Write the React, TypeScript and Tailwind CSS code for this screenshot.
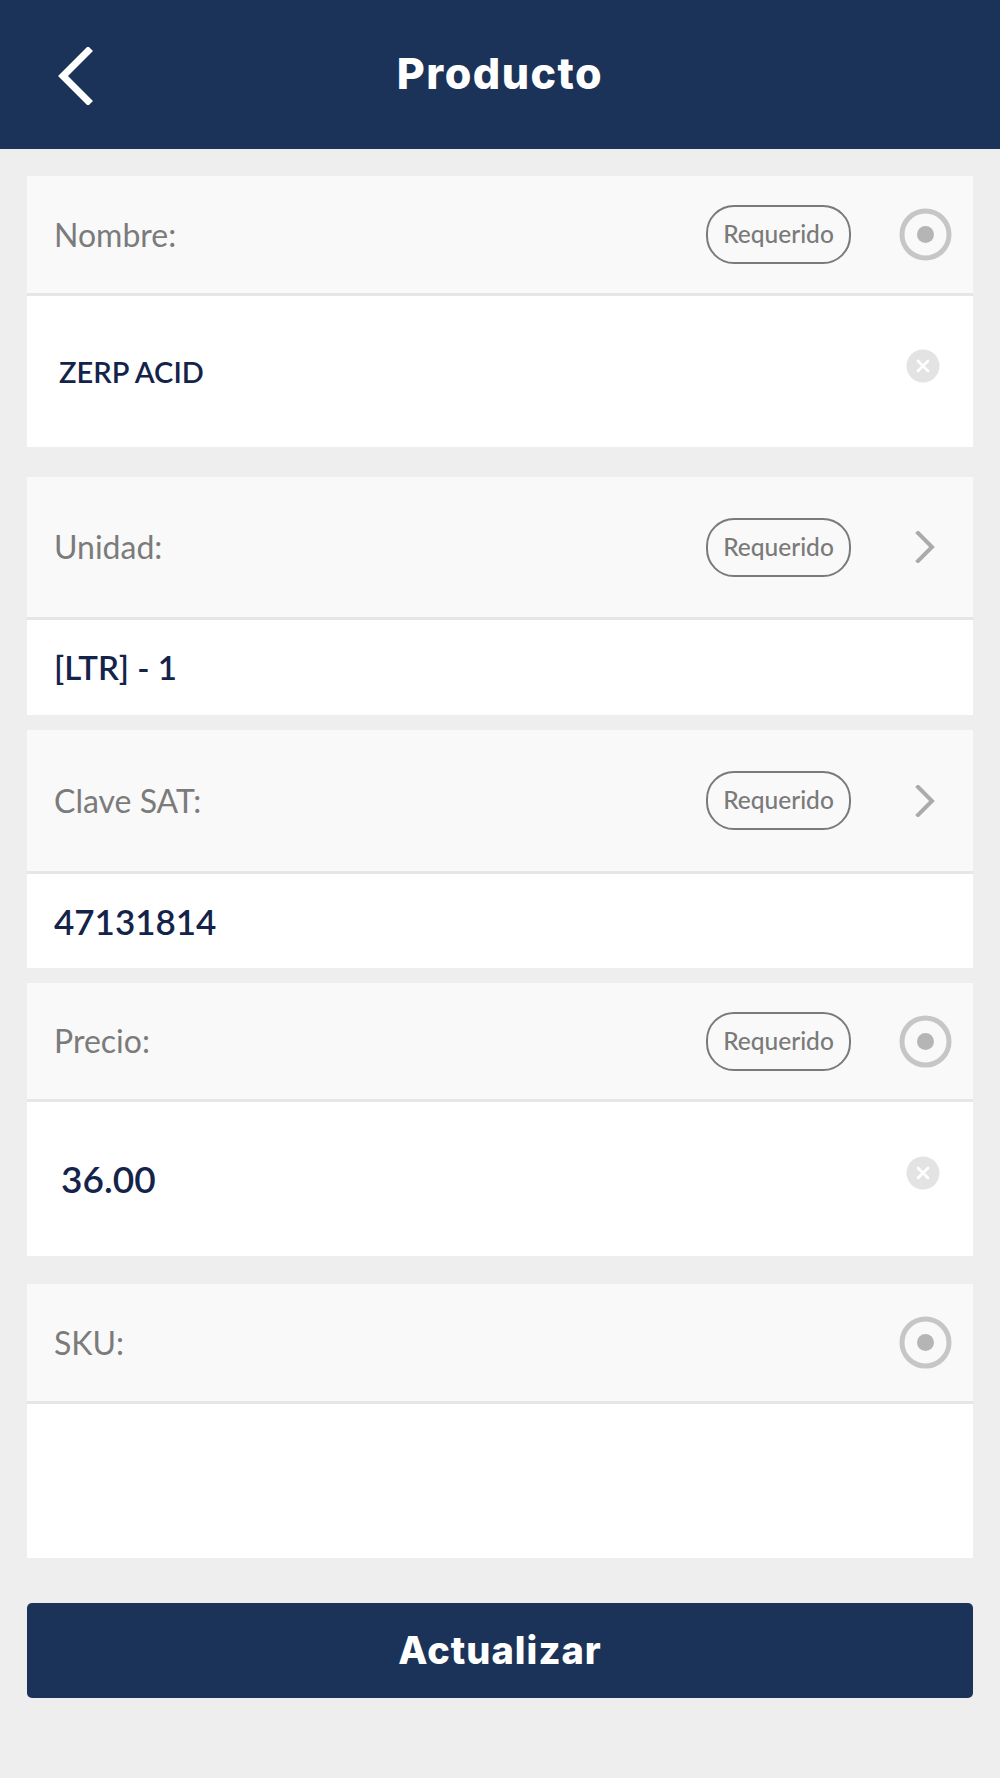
import React from "react";

const RadioIcon = () => (
  <svg width="53" height="53" viewBox="0 0 53 53">
    <circle cx="26.5" cy="26.5" r="23.5" fill="none" stroke="#c6c6c6" strokeWidth="5" />
    <circle cx="26.5" cy="26.5" r="8.5" fill="#b5b5b5" />
  </svg>
);

const ChevronRight = () => (
  <svg width="53" height="32" viewBox="0 0 53 32">
    <polyline points="19,2 33,16 19,30" fill="none" stroke="#ababab" strokeWidth="4" strokeLinecap="square" />
  </svg>
);

const ClearIcon = () => (
  <svg width="34" height="34" viewBox="0 0 34 34">
    <circle cx="17" cy="17" r="16.5" fill="#e3e3e3" />
    <path d="M12 12 L22 22 M22 12 L12 22" stroke="#ffffff" strokeWidth="2.8" strokeLinecap="round" />
  </svg>
);

const Pill = () => (
  <div className="flex h-[59px] w-[145px] items-center justify-center rounded-[28px] border-2 border-[#7a7a7a] text-[24.5px] font-medium text-[#7a7a7a]">
    Requerido
  </div>
);

type FieldProps = {
  label: string;
  headerH: string;
  bodyH: string;
  required?: boolean;
  icon: "radio" | "chevron";
  value?: string;
  valueClass?: string;
  clear?: boolean;
};

const Field = ({ label, headerH, bodyH, required, icon, value, valueClass, clear }: FieldProps) => (
  <div className="w-full">
    <div className={`flex ${headerH} items-center border-b-[3px] border-[#e6e6e6] bg-[#f9f9f9] pl-[27px] pr-[21px]`}>
      <span className="flex-1 text-[32px] text-[#7b7b7b]">{label}</span>
      {required && <Pill />}
      <div className="ml-[48px] flex w-[53px] items-center justify-center">
        {icon === "radio" ? <RadioIcon /> : <ChevronRight />}
      </div>
    </div>
    <div className={`flex ${bodyH} items-center bg-white pr-[33px]`}>
      <span className={`flex-1 ${valueClass ?? ""}`}>{value}</span>
      {clear && (
        <div className="-mt-[12px]">
          <ClearIcon />
        </div>
      )}
    </div>
  </div>
);

export default function App() {
  return (
    <div className="min-h-[1778px] w-full bg-[#eeeeee] font-['Lato',sans-serif]">
      <header className="relative flex h-[149px] items-center justify-center bg-[#1b3358]">
        <svg className="absolute left-[56px] top-[47px]" width="38" height="58" viewBox="0 0 38 58">
          <polyline points="32,4 7,29 32,54" fill="none" stroke="#ffffff" strokeWidth="7" strokeLinecap="square" />
        </svg>
        <h1 className="-mt-[2px] font-['Inter',sans-serif] text-[43px] font-extrabold tracking-[1.5px] text-white">Producto</h1>
      </header>

      <div className="flex flex-col px-[27px] pt-[27px]">
        <Field
          label="Nombre:"
          headerH="h-[120px]"
          bodyH="h-[151px]"
          required
          icon="radio"
          value="ZERP ACID"
          valueClass="pl-[32px] text-[29px] font-semibold text-[#14234a]"
          clear
        />
        <div className="h-[30px]" />
        <Field
          label="Unidad:"
          headerH="h-[143px]"
          bodyH="h-[95px]"
          required
          icon="chevron"
          value="[LTR] - 1"
          valueClass="pl-[27px] text-[33px] font-semibold text-[#14234a]"
        />
        <div className="h-[15px]" />
        <Field
          label="Clave SAT:"
          headerH="h-[144px]"
          bodyH="h-[94px]"
          required
          icon="chevron"
          value="47131814"
          valueClass="pl-[27px] text-[35px] font-semibold text-[#14234a]"
        />
        <div className="h-[15px]" />
        <Field
          label="Precio:"
          headerH="h-[119px]"
          bodyH="h-[154px]"
          required
          icon="radio"
          value="36.00"
          valueClass="pl-[34px] text-[37px] font-semibold text-[#14234a]"
          clear
        />
        <div className="h-[28px]" />
        <Field label="SKU:" headerH="h-[120px]" bodyH="h-[154px]" icon="radio" value="" />
        <button className="mt-[45px] flex h-[95px] w-full items-center justify-center rounded-[5px] bg-[#1b3358] font-['Inter',sans-serif] text-[38px] font-extrabold tracking-[1px] text-white">
          Actualizar
        </button>
      </div>
    </div>
  );
}
